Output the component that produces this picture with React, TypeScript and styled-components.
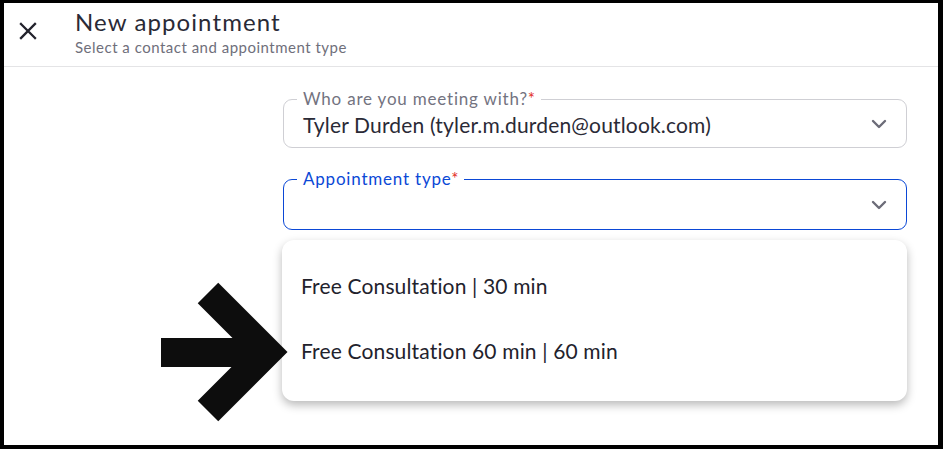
import React from 'react';
import styled, { createGlobalStyle } from 'styled-components';

const GlobalStyle = createGlobalStyle`
  html, body {
    margin: 0;
    padding: 0;
    background: #000000;
  }
  body {
    font-family: 'Lato', 'Liberation Sans', sans-serif;
  }
`;

const Frame = styled.div`
  position: relative;
  height: 442px;
  margin: 3px 5px 4px 4px;
  background: #ffffff;
  overflow: hidden;
`;

const Header = styled.div`
  display: flex;
  align-items: flex-start;
  height: 63px;
  border-bottom: 1px solid #e4e4e6;
`;

const CloseButton = styled.button`
  display: flex;
  align-items: center;
  justify-content: center;
  width: 24px;
  height: 24px;
  margin: 16px 0 0 12px;
  padding: 0;
  border: none;
  background: none;
  color: #22222c;
  cursor: pointer;
`;

const TitleBlock = styled.div`
  display: flex;
  flex-direction: column;
  margin-left: 35px;
  padding-top: 5px;
`;

const Title = styled.div`
  font-size: 24px;
  line-height: 28px;
  letter-spacing: 1.1px;
  color: #2a2a36;
`;

const Subtitle = styled.div`
  font-size: 15px;
  line-height: 18px;
  letter-spacing: 0.5px;
  margin-top: 2px;
  color: #6f6f7b;
`;

const Form = styled.div`
  display: flex;
  flex-direction: column;
  gap: 31px;
  width: 624px;
  margin: 32px 31px 0 auto;
`;

const Field = styled.div<{ $focused?: boolean }>`
  position: relative;
  display: flex;
  align-items: center;
  height: ${p => (p.$focused ? 51 : 49)}px;
  box-sizing: border-box;
  padding: 1px 19px 0 19px;
  border: ${p => (p.$focused ? '1.5px solid #0b48d6' : '1px solid #cfcfd4')};
  border-radius: 9px;
`;

const Legend = styled.span<{ $focused?: boolean }>`
  position: absolute;
  top: -10px;
  left: 13px;
  padding: 0 5px 0 6px;
  background: #ffffff;
  font-size: 17px;
  line-height: 18px;
  letter-spacing: 0.8px;
  color: ${p => (p.$focused ? '#0b48d6' : '#73737f')};
`;

const Required = styled.span`
  color: #e2301f;
`;

const Value = styled.span`
  flex: 1;
  font-size: 21px;
  letter-spacing: 0.17px;
  color: #2a2a36;
`;

const Chevron = styled.svg`
  flex: none;
  width: 16px;
  height: 10px;
  color: #6c6c78;
`;

const Menu = styled.ul`
  list-style: none;
  width: 625px;
  margin: 10px 31px 0 auto;
  padding: 13px 0 18px;
  border-radius: 12px;
  background: #ffffff;
  box-shadow: 0 4px 10px rgba(0, 0, 0, 0.28);
`;

const MenuItem = styled.li`
  display: flex;
  align-items: center;
  height: 65px;
  padding-left: 19px;
  font-size: 21px;
  letter-spacing: 0.15px;
  color: #22222c;
`;

const Pointer = styled.svg`
  position: absolute;
  left: 146px;
  top: 272px;
  width: 150px;
  height: 160px;
`;

function ChevronDown() {
  return (
    <Chevron viewBox="0 0 16 10" fill="none">
      <path d="M2 2l6 6 6-6" stroke="currentColor" strokeWidth="2.4" strokeLinecap="round" strokeLinejoin="round" />
    </Chevron>
  );
}

export default function App() {
  return (
    <>
      <GlobalStyle />
      <Frame>
        <Header>
          <CloseButton aria-label="Close">
            <svg width="18" height="18" viewBox="0 0 18 18">
              <path d="M2 2l14 14M16 2L2 16" stroke="currentColor" strokeWidth="2.3" strokeLinecap="square" />
            </svg>
          </CloseButton>
          <TitleBlock>
            <Title>New appointment</Title>
            <Subtitle>Select a contact and appointment type</Subtitle>
          </TitleBlock>
        </Header>

        <Form>
          <Field>
            <Legend>
              Who are you meeting with?<Required>*</Required>
            </Legend>
            <Value>Tyler Durden (tyler.m.durden@outlook.com)</Value>
            <ChevronDown />
          </Field>
          <Field $focused>
            <Legend $focused>
              Appointment type<Required>*</Required>
            </Legend>
            <Value />
            <ChevronDown />
          </Field>
        </Form>

        <Menu>
          <MenuItem>Free Consultation | 30 min</MenuItem>
          <MenuItem>Free Consultation 60 min | 60 min</MenuItem>
        </Menu>

        {/* annotation arrow drawn over the menu, viewBox in page coordinates */}
        <Pointer viewBox="150 275 150 160">
          <g fill="none" stroke="#0d0d0d" strokeWidth="29" strokeLinejoin="miter">
            <path d="M208 293L267 352 208 411" strokeLinecap="butt" />
            <path d="M161 352.5H262" />
          </g>
        </Pointer>
      </Frame>
    </>
  );
}
